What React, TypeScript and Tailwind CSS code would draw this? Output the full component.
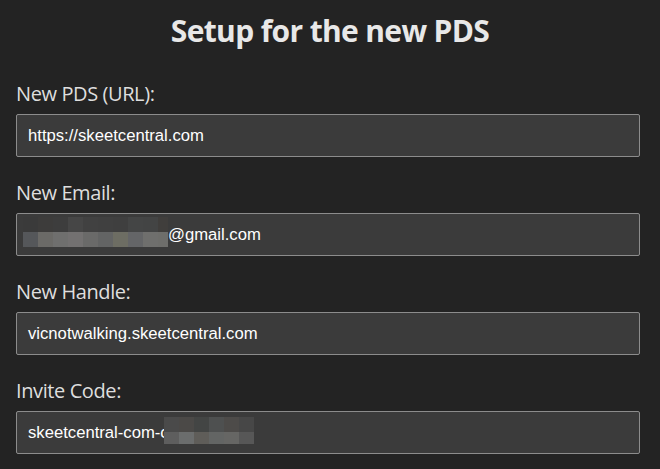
const emailTop = ["#3a3a3a", "#3d3c3b", "#3d3d3d", "#464646", "#414141", "#404040", "#3f3f3f", "#444545", "#434444", "#403e3c"]
const emailBottom = ["#55575a", "#6b6a67", "#6f6f6e", "#737171", "#6a6a69", "#636464", "#6d6d63", "#646567", "#6f6f6d", "#6e6e6b"]
const inviteTop = ["#4a4a4a", "#4b4947", "#434544", "#4e5050", "#4d4b49", "#474747"]
const inviteBottom = ["#5e5e5e", "#6b6d6d", "#5f5d59", "#636564", "#666664", "#575757"]

function Mosaic({ top, bottom, last, h1, h2 }: { top: string[]; bottom: string[]; last: number; h1: number; h2: number }) {
  const widths = top.map((_, i) => (i === top.length - 1 ? last : 15))
  return (
    <span className="flex flex-col">
      {[top, bottom].map((row, r) => (
        <span key={r} className="flex">
          {row.map((c, i) => (
            <span key={i} className="block" style={{ background: c, width: widths[i], height: r === 0 ? h1 : h2 }} />
          ))}
        </span>
      ))}
    </span>
  )
}

function Field({ label, children }: { label: string; children: React.ReactNode }) {
  return (
    <div>
      <label className="mb-[9px] block h-[23px] text-[20px] leading-[23px] tracking-[-0.4px] text-[#dedede] font-['Open_Sans',sans-serif]">{label}</label>
      <div className="relative flex h-[43px] w-[624px] items-center rounded-[2px] border border-[#8c8c8c] bg-[#3b3b3b] text-[16.67px] text-white font-['Liberation_Sans',Arial,sans-serif]">
        {children}
      </div>
    </div>
  )
}

export default function App() {
  return (
    <div className="min-h-[469px] bg-[#232323] pl-4 pt-[11px]">
      <h2 className="h-[40px] pr-4 text-center text-[30px] font-bold leading-[40px] tracking-[-0.65px] text-[#e8e8e8] font-['Open_Sans',sans-serif]">
        Setup for the new PDS
      </h2>
      <div className="mt-[31px] flex flex-col gap-6">
        <Field label="New PDS (URL):">
          <span className="pl-[11px]">https://skeetcentral.com</span>
        </Field>
        <Field label="New Email:">
          <span className="flex items-center pl-[6px]">
            <span className="-mt-[6px]">
              <Mosaic top={emailTop} bottom={emailBottom} last={10} h1={15} h2={15} />
            </span>
            <span>@gmail.com</span>
          </span>
        </Field>
        <Field label="New Handle:">
          <span className="pl-[11px]">vicnotwalking.skeetcentral.com</span>
        </Field>
        <Field label="Invite Code:">
          <span className="pl-[11px]">skeetcentral-com-c</span>
          <span className="absolute left-[147px] top-[5px]">
            <Mosaic top={inviteTop} bottom={inviteBottom} last={15} h1={15} h2={12} />
          </span>
        </Field>
      </div>
    </div>
  )
}
